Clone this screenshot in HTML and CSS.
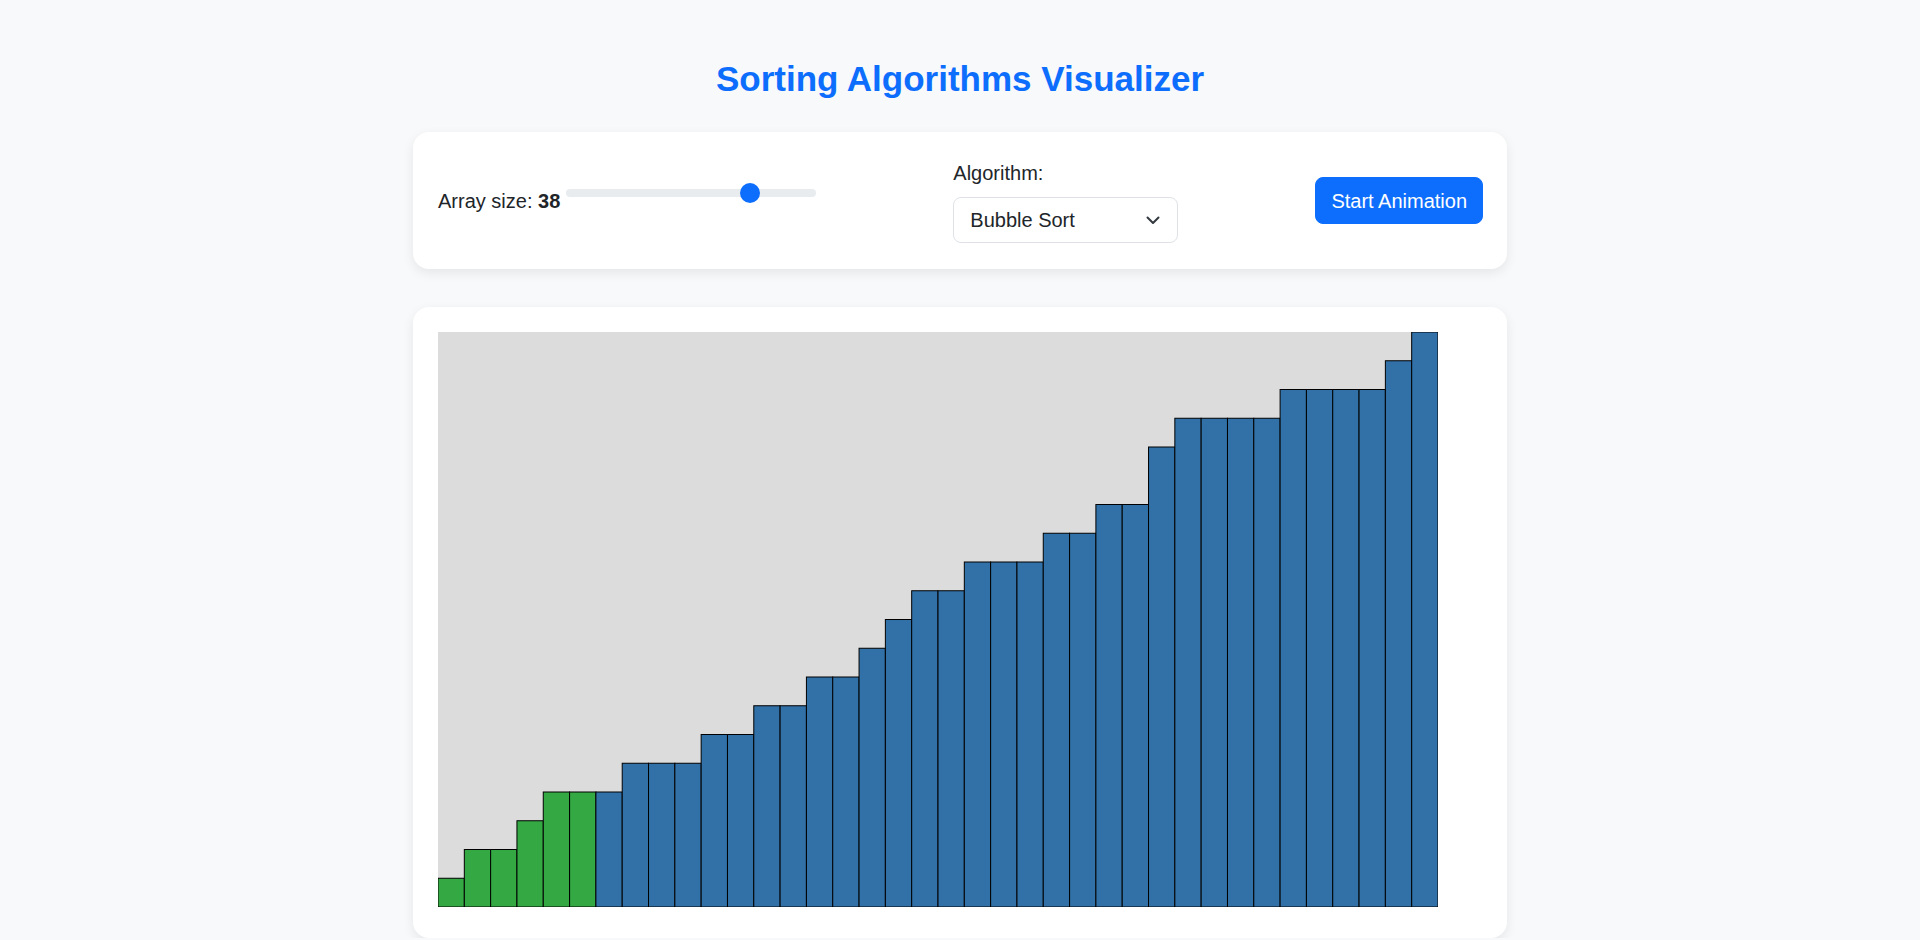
FILE: index.html
```html
<!DOCTYPE html>
<html lang="en">
<head>
<meta charset="utf-8">
<title>Sorting Algorithms Visualizer</title>
<link rel="stylesheet" href="styles.css">
</head>
<body>
<div class="page">
  <h1 class="title">Sorting Algorithms Visualizer</h1>

  <div class="card controls">
    <div class="size-group">
      <label class="size-label" for="size">Array size: <strong>38</strong></label>
      <input class="slider" id="size" type="range" min="1" max="50" value="38">
    </div>

    <div class="algo-group">
      <label class="algo-label" for="algo">Algorithm:</label>
      <div class="select-wrap">
        <select class="select" id="algo">
          <option>Bubble Sort</option>
          <option>Selection Sort</option>
          <option>Insertion Sort</option>
          <option>Merge Sort</option>
          <option>Quick Sort</option>
        </select>
        <svg class="chevron" width="14" height="9" viewBox="0 0 14 9" aria-hidden="true">
          <polyline points="1.5,1.5 7,7 12.5,1.5" fill="none" stroke="#343a40" stroke-width="2" stroke-linecap="round" stroke-linejoin="round"/>
        </svg>
      </div>
    </div>

    <button class="btn" type="button">Start Animation</button>
  </div>

  <div class="card chart-card">
    <svg class="chart" width="1000" height="575" viewBox="0 0 1000 575">
      <rect x="0" y="0" width="1000" height="575" fill="#dcdcdc"/>
      <g stroke="#000" stroke-width="1">
        <rect class="bar-done" x="0" y="546.25" width="26.316" height="28.75"/>
        <rect class="bar-done" x="26.316" y="517.5" width="26.316" height="57.5"/>
        <rect class="bar-done" x="52.632" y="517.5" width="26.316" height="57.5"/>
        <rect class="bar-done" x="78.947" y="488.75" width="26.316" height="86.25"/>
        <rect class="bar-done" x="105.263" y="460" width="26.316" height="115"/>
        <rect class="bar-done" x="131.579" y="460" width="26.316" height="115"/>
        <rect class="bar" x="157.895" y="460" width="26.316" height="115"/>
        <rect class="bar" x="184.211" y="431.25" width="26.316" height="143.75"/>
        <rect class="bar" x="210.526" y="431.25" width="26.316" height="143.75"/>
        <rect class="bar" x="236.842" y="431.25" width="26.316" height="143.75"/>
        <rect class="bar" x="263.158" y="402.5" width="26.316" height="172.5"/>
        <rect class="bar" x="289.474" y="402.5" width="26.316" height="172.5"/>
        <rect class="bar" x="315.789" y="373.75" width="26.316" height="201.25"/>
        <rect class="bar" x="342.105" y="373.75" width="26.316" height="201.25"/>
        <rect class="bar" x="368.421" y="345" width="26.316" height="230"/>
        <rect class="bar" x="394.737" y="345" width="26.316" height="230"/>
        <rect class="bar" x="421.053" y="316.25" width="26.316" height="258.75"/>
        <rect class="bar" x="447.368" y="287.5" width="26.316" height="287.5"/>
        <rect class="bar" x="473.684" y="258.75" width="26.316" height="316.25"/>
        <rect class="bar" x="500" y="258.75" width="26.316" height="316.25"/>
        <rect class="bar" x="526.316" y="230" width="26.316" height="345"/>
        <rect class="bar" x="552.632" y="230" width="26.316" height="345"/>
        <rect class="bar" x="578.947" y="230" width="26.316" height="345"/>
        <rect class="bar" x="605.263" y="201.25" width="26.316" height="373.75"/>
        <rect class="bar" x="631.579" y="201.25" width="26.316" height="373.75"/>
        <rect class="bar" x="657.895" y="172.5" width="26.316" height="402.5"/>
        <rect class="bar" x="684.211" y="172.5" width="26.316" height="402.5"/>
        <rect class="bar" x="710.526" y="115" width="26.316" height="460"/>
        <rect class="bar" x="736.842" y="86.25" width="26.316" height="488.75"/>
        <rect class="bar" x="763.158" y="86.25" width="26.316" height="488.75"/>
        <rect class="bar" x="789.474" y="86.25" width="26.316" height="488.75"/>
        <rect class="bar" x="815.789" y="86.25" width="26.316" height="488.75"/>
        <rect class="bar" x="842.105" y="57.5" width="26.316" height="517.5"/>
        <rect class="bar" x="868.421" y="57.5" width="26.316" height="517.5"/>
        <rect class="bar" x="894.737" y="57.5" width="26.316" height="517.5"/>
        <rect class="bar" x="921.053" y="57.5" width="26.316" height="517.5"/>
        <rect class="bar" x="947.368" y="28.75" width="26.316" height="546.25"/>
        <rect class="bar" x="973.684" y="0" width="26.316" height="575"/>
      </g>
    </svg>
  </div>
</div>
</body>
</html>
```

FILE: styles.css
```css
* {
  box-sizing: border-box;
}

html, body {
  margin: 0;
  padding: 0;
}

body {
  background: #f8f9fa;
  color: #212529;
  font-family: "Liberation Sans", Arial, sans-serif;
  font-size: 20px;
  line-height: 30px;
}

.page {
  padding-top: 59px;
}

.title {
  margin: 0 0 33px;
  text-align: center;
  color: #0d6efd;
  font-size: 35px;
  line-height: 40px;
  font-weight: 700;
}

.card {
  width: 1094px;
  margin: 0 auto;
  background: #ffffff;
  border-radius: 16px;
  box-shadow: 0 4px 12px rgba(0, 0, 0, 0.08);
}

.controls {
  display: flex;
  align-items: center;
  justify-content: space-between;
  padding: 26px 24px 26px 25px;
  margin-bottom: 38px;
}

.size-group {
  display: flex;
  align-items: center;
}

.size-label {
  white-space: nowrap;
}

.size-label strong {
  font-weight: 700;
}

.slider {
  -webkit-appearance: none;
  appearance: none;
  width: 250px;
  height: 8px;
  margin: 0 0 16px 6px;
  padding: 0;
  background: #e9ecef;
  border-radius: 4px;
  outline: none;
}

.slider::-webkit-slider-thumb {
  -webkit-appearance: none;
  appearance: none;
  width: 20px;
  height: 20px;
  border-radius: 50%;
  background: #0d6efd;
  border: none;
  cursor: pointer;
}

.algo-group {
  display: flex;
  flex-direction: column;
  width: 225px;
}

.algo-label {
  display: block;
  margin-bottom: 9px;
}

.select-wrap {
  position: relative;
}

.select {
  -webkit-appearance: none;
  appearance: none;
  display: block;
  width: 225px;
  height: 46px;
  padding: 7px 48px 7px 16px;
  font-family: inherit;
  font-size: 20px;
  line-height: 30px;
  color: #212529;
  background: #ffffff;
  border: 1px solid #dee2e6;
  border-radius: 8px;
  outline: none;
}

.chevron {
  position: absolute;
  right: 18px;
  top: 19px;
  pointer-events: none;
}

.btn {
  height: 47px;
  padding: 0 15px;
  font-family: inherit;
  font-size: 20px;
  line-height: 30px;
  color: #ffffff;
  background: #0d6efd;
  border: 1px solid #0d6efd;
  border-radius: 8px;
  cursor: pointer;
}

.chart-card {
  padding: 25px 25px 31px;
}

.chart {
  display: block;
}

.bar-done {
  fill: #33a843;
}

.bar {
  fill: #3171a7;
}
```
